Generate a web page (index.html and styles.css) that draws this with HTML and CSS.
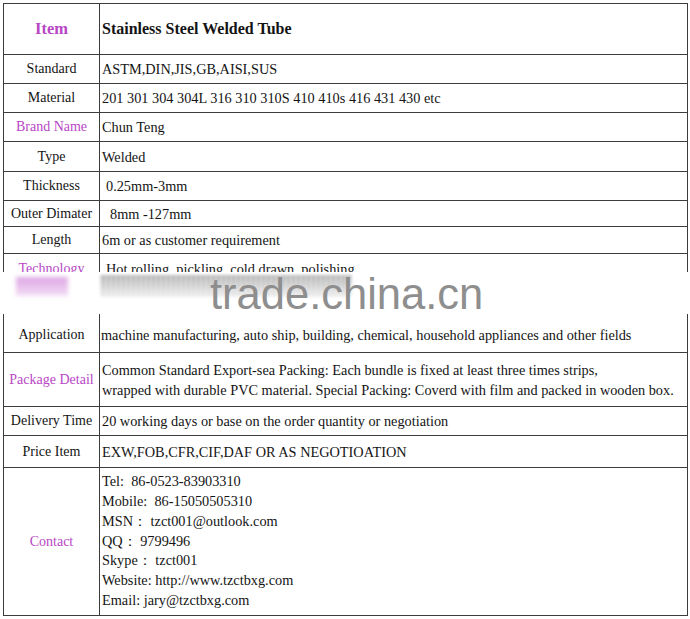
FILE: index.html
```html
<!DOCTYPE html>
<html>
<head>
<meta charset="utf-8">
<link rel="stylesheet" href="styles.css">
</head>
<body>
<div class="page">
  <table class="spec">
    <colgroup><col class="c-label"><col class="c-value"></colgroup>
    <tr class="r-head">
      <td class="label accent bold">Item</td>
      <td class="value title">Stainless Steel Welded Tube</td>
    </tr>
    <tr class="r29"><td class="label">Standard</td><td class="value">ASTM,DIN,JIS,GB,AISI,SUS</td></tr>
    <tr class="r29"><td class="label">Material</td><td class="value">201 301 304 304L 316 310 310S 410 410s 416 431 430 etc</td></tr>
    <tr class="r29"><td class="label accent">Brand Name</td><td class="value">Chun Teng</td></tr>
    <tr class="r30"><td class="label">Type</td><td class="value">Welded</td></tr>
    <tr class="r29"><td class="label">Thickness</td><td class="value indent1">0.25mm-3mm</td></tr>
    <tr class="r26"><td class="label">Outer Dimater</td><td class="value indent2">8mm -127mm</td></tr>
    <tr class="r27"><td class="label">Length</td><td class="value">6m or as customer requirement</td></tr>
    <tr class="r30"><td class="label accent">Technology</td><td class="value indent1">Hot rolling, pickling, cold drawn, polishing</td></tr>
    <tr class="r-app"><td class="label bottom">Application</td><td class="value bottom tight">machine manufacturing, auto ship, building, chemical, household appliances and other fields</td></tr>
    <tr class="r-pack"><td class="label accent">Package Detail</td><td class="value">Common Standard Export-sea Packing: Each bundle is fixed at least three times strips,<br>wrapped with durable PVC material. Special Packing: Coverd with film and packed in wooden box.</td></tr>
    <tr class="r29"><td class="label">Delivery Time</td><td class="value">20 working days or base on the order quantity or negotiation</td></tr>
    <tr class="r32"><td class="label">Price Item</td><td class="value">EXW,FOB,CFR,CIF,DAF OR AS NEGOTIOATION</td></tr>
    <tr class="r-contact">
      <td class="label accent">Contact</td>
      <td class="value lines">Tel:&nbsp; 86-0523-83903310<br>Mobile:&nbsp; 86-15050505310<br>MSN：&nbsp;tzct001@outlook.com<br>QQ：&nbsp;9799496<br>Skype：&nbsp;tzct001<br>Website: http://www.tzctbxg.com<br>Email: jary@tzctbxg.com</td>
    </tr>
  </table>
  <div class="band">
    <div class="smear-pink"></div>
    <div class="smear-gray"></div>
    <div class="watermark">trade.china.cn</div>
  </div>
</div>
</body>
</html>
```

FILE: styles.css
```css
html, body {
  margin: 0;
  padding: 0;
  background: #ffffff;
}
.page {
  position: relative;
  width: 690px;
  height: 619px;
  padding: 3px 0 0 3px;
  box-sizing: border-box;
}
.spec {
  border-collapse: collapse;
  width: 685px;
  table-layout: fixed;
  font-family: "Liberation Serif", "Times New Roman", serif;
  color: #141414;
}
.c-label { width: 96px; }
.spec td {
  border: 1px solid #3c3c3c;
  padding: 0;
  vertical-align: middle;
  line-height: 20px;
}
.label {
  text-align: center;
  font-size: 14px;
  white-space: nowrap;
}
.value {
  font-size: 14.3px;
  padding-left: 2px !important;
  white-space: nowrap;
}
.accent { color: #b846c6; }
.bold { font-weight: bold; font-size: 16.5px; }
.title { font-weight: bold; font-size: 16px; }
.indent1 { padding-left: 6px !important; }
.indent2 { padding-left: 10px !important; }
.bottom { vertical-align: bottom !important; padding-bottom: 7px !important; }
.tight { padding-left: 1px !important; }
.lines { line-height: 19.8px !important; }

.r-head td { height: 50px; }
.r26 td { height: 25px; }
.r27 td { height: 26px; }
.r29 td { height: 28px; }
.r30 td { height: 29px; }
.r32 td { height: 31px; }
.r-app td { height: 61px; }
.r-pack td { height: 53px; }
.r-contact td { height: 147px; }

.band {
  position: absolute;
  left: 0;
  top: 272px;
  width: 690px;
  height: 42px;
  background: #ffffff;
}
.smear-pink {
  position: absolute;
  left: 16px;
  top: 5px;
  width: 52px;
  height: 19px;
  background: linear-gradient(to bottom, rgba(214,150,222,0.85), rgba(232,190,236,0.5));
  filter: blur(2px);
}
.smear-gray {
  position: absolute;
  left: 100px;
  top: 3px;
  width: 252px;
  height: 22px;
  background:
    repeating-linear-gradient(to right, rgba(255,255,255,0.4) 0 2px, rgba(255,255,255,0) 2px 5px),
    linear-gradient(to bottom, rgba(150,150,150,0.75), rgba(205,205,205,0.35));
  filter: blur(1.5px);
}
.watermark {
  position: absolute;
  left: 210px;
  top: 0;
  font-family: "Liberation Sans", Arial, sans-serif;
  font-size: 43.5px;
  line-height: 44px;
  color: #8e8e8e;
}
```
